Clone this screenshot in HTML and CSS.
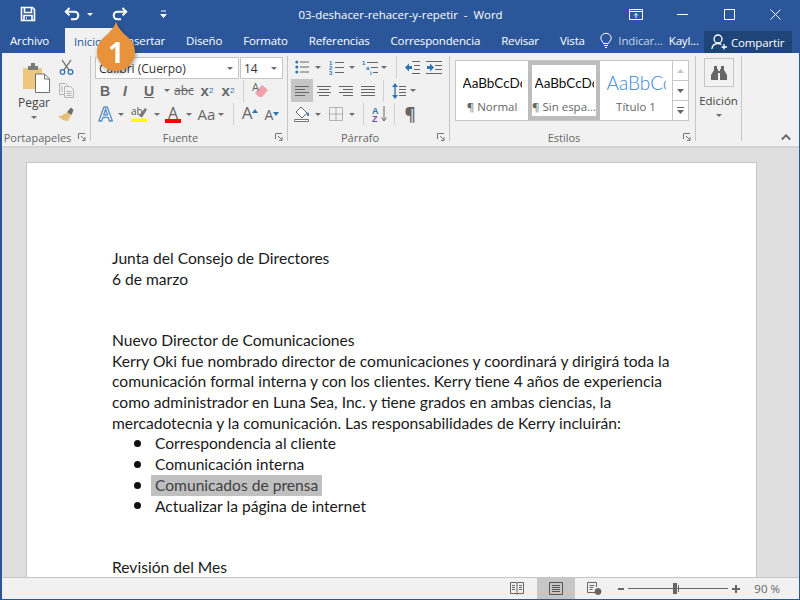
FILE: index.html
```html
<!DOCTYPE html>
<html lang="es">
<head>
<meta charset="utf-8">
<title>03-deshacer-rehacer-y-repetir - Word</title>
<link rel="stylesheet" href="styles.css">
</head>
<body>
<div class="window">

  <header class="titlebar">
    <div class="qat">
      <svg class="qat-save" width="16" height="16" viewBox="0 0 16 16" fill="none" stroke="#fff" stroke-width="1.6"><path d="M1.5 1.5h11l2 2v11h-13z"/><path d="M4.5 2v4.5h7V2"/><path d="M4 14.5V9.500h8v5"/><path d="M6 12h1"/></svg>
      <svg class="qat-undo" width="16" height="14" viewBox="0 0 16 14" fill="none" stroke="#fff" stroke-width="2"><path d="M5.500 1L1.800 4.700l3.700 3.700"/><path d="M2 4.700h8.500a3.800 3.800 0 0 1 0 7.600H7"/></svg>
      <span class="caret caret-white qat-caret"></span>
      <svg class="qat-redo" width="16" height="14" viewBox="0 0 16 14" fill="none" stroke="#fff" stroke-width="2"><path d="M10.500 1l3.700 3.700-3.700 3.700"/><path d="M14 4.700H5.500a3.800 3.800 0 0 0 0 7.600H9"/></svg>
      <svg class="qat-custom" width="7" height="8" viewBox="0 0 7 8"><path d="M1 1h5" stroke="#fff"/><path d="M0 4h7L3.500 8z" fill="#fff"/></svg>
    </div>
    <div class="doc-title">03-deshacer-rehacer-y-repetir &nbsp;-&nbsp; Word</div>
    <div class="winctl">
      <svg class="ctl-ribbon" width="14" height="11" viewBox="0 0 14 11" fill="none" stroke="#fff"><path d="M.5 .5h13v10H.5z"/><path d="M.5 2.500h13" /><path d="M7 9V4.500M5 6.500l2-2 2 2"/></svg>
      <svg class="ctl-min" width="11" height="1" viewBox="0 0 11 1"><path d="M0 .5h11" stroke="#fff"/></svg>
      <svg class="ctl-max" width="11" height="11" viewBox="0 0 11 11" fill="none" stroke="#fff"><path d="M.5 .5h10v10H.5z"/></svg>
      <svg class="ctl-close" width="11" height="11" viewBox="0 0 11 11" fill="none" stroke="#fff"><path d="M.5 .5l10 10M10.500 .5l-10 10"/></svg>
    </div>
  </header>

  <nav class="tabs">
    <span class="tab tab-file">Archivo</span>
    <span class="tab tab-active">Inicio</span>
    <span class="tab tab-insert">Insertar</span>
    <span class="tab">Diseño</span>
    <span class="tab">Formato</span>
    <span class="tab">Referencias</span>
    <span class="tab">Correspondencia</span>
    <span class="tab">Revisar</span>
    <span class="tab">Vista</span>
    <svg class="bulb" width="12" height="15" viewBox="0 0 12 15" fill="none" stroke="#fff"><path d="M3.500 10.500C3 8.500 .8 7.500 .8 5a5.200 4.700 0 0 1 10.400 0c0 2.500-2.200 3.500-2.700 5.500z"/><path d="M4 12.500h4M5 14.500h2"/></svg>
    <span class="tell">Indicar...</span>
    <span class="user">Kayl...</span>
    <span class="share">
      <svg width="17" height="16" viewBox="0 0 17 16" fill="none" stroke="#fff" stroke-width="1.300"><circle cx="7" cy="5" r="4"/><path d="M.8 15c.5-3.500 3-5.500 6.200-5.500 1.500 0 2.500.4 3.500 1"/><path d="M13 10v5.500M10.500 13H16"/></svg>
      Compartir
    </span>
  </nav>

  <section class="ribbon">
    <div class="group g-clip">
      <div class="gbody">
        <div class="paste">
          <svg width="29" height="31" viewBox="0 0 29 31"><path d="M1 6h19v21H1z" fill="#eec77f"/><path d="M6 4h3V1h4v3h3v4H6z" fill="#7a7a7a"/><path d="M13.500 12h9l5 5v13.500h-14z" fill="#fff" stroke="#6e6e6e"/><path d="M22.500 12v5h5" fill="none" stroke="#6e6e6e"/></svg>
          <span class="paste-label">Pegar</span>
          <span class="caret paste-caret"></span>
        </div>
        <div class="clip-tools">
          <div class="row">
            <svg width="15" height="16" viewBox="0 0 15 16" fill="none" stroke-width="1.300"><path d="M3 1l7 10M12 1L5 11" stroke="#666"/><circle cx="3.500" cy="13" r="2.300" stroke="#2f75b5"/><circle cx="11.500" cy="13" r="2.300" stroke="#2f75b5"/></svg>
          </div>
          <div class="row">
            <svg width="15" height="15" viewBox="0 0 15 15" fill="#f1f1f1" stroke="#b5b5b5"><path d="M.5 .5h6l2 2v9h-8z"/><path d="M5.500 3.500h6l3 3v8h-9z"/><path d="M7.500 8.500h5M7.500 10.500h5M7.500 12.500h5M2 4h2M2 6h2M2 8h2" fill="none"/></svg>
          </div>
          <div class="row">
            <svg width="16" height="15" viewBox="0 0 16 15"><path d="M10 5l3 3-3 6C6 14 3 12 0 9c3 0 5-1 6-2z" fill="#e6bf7a"/><path d="M9 5l4-4.500 2.500 2.500-2 5z" fill="#6e6e6e"/></svg>
          </div>
        </div>
      </div>
      <div class="glabel"><span class="gname">Portapapeles</span><span class="launch"><svg width="8" height="8" viewBox="0 0 8 8" fill="none" stroke="#777"><path d="M.5 6V.5H7M3 3l4 4M7 4v3.500H4"/></svg></span></div>
    </div>
    <div class="vsep"></div>

    <div class="group g-font">
      <div class="gbody gcol">
        <div class="row row-end">
          <div class="combo combo-font"><span>Calibri (Cuerpo)</span><i class="caret"></i></div>
          <div class="combo combo-size"><span>14</span><i class="caret"></i></div>
        </div>
        <div class="row">
          <span class="tool w20 t-b">B</span>
          <span class="tool w20 t-i">I</span>
          <span class="tool w28 t-u">U</span>
          <span class="tool w8"><i class="caret"></i></span>
          <span class="tool w26 t-abc">abc</span>
          <span class="tool w20 t-x">x<sub>2</sub></span>
          <span class="tool w22 t-x">x<sup>2</sup></span>
          <span class="sep ml4"></span>
          <span class="tool w32">
            <svg width="16" height="15" viewBox="0 0 16 15"><path d="M7 14L3 10l7-8 6 5-6 7z" fill="#f0a0aa"/><text x="0" y="8" class="ico-a">A</text></svg>
          </span>
        </div>
        <div class="row">
          <span class="tool w21 t-glow">A</span>
          <span class="tool w10"><i class="caret"></i></span>
          <span class="tool w26 stack">
            <svg width="16" height="16" viewBox="0 0 16 16"><text x="0" y="9" class="ico-ab">ab</text><path d="M8 10l6-8 2 1.500-5 8z" fill="#777"/><path d="M0 12.500h16V16H0z" fill="#ffff00"/></svg>
          </span>
          <span class="tool w9"><i class="caret"></i></span>
          <span class="tool w24 stack">
            <svg width="16" height="17" viewBox="0 0 16 17"><text x="8" y="12.500" text-anchor="middle" class="ico-big">A</text><path d="M0 13h16v4H0z" fill="#f00"/></svg>
          </span>
          <span class="tool w8"><i class="caret"></i></span>
          <span class="tool w23 ml2 t-aa">Aa</span>
          <span class="tool w6"><i class="caret"></i></span>
          <span class="sep ml9"></span>
          <span class="tool w32 t-grow">A<svg class="tip" width="6" height="4" viewBox="0 0 6 4"><path d="M0 4l3-4 3 4z" fill="#2f75b5"/></svg></span>
          <span class="tool w12 t-shrink">A<svg class="tip" width="6" height="4" viewBox="0 0 6 4"><path d="M0 0l3 4 3-4z" fill="#2f75b5"/></svg></span>
        </div>
      </div>
      <div class="glabel"><span class="gname">Fuente</span><span class="launch"><svg width="8" height="8" viewBox="0 0 8 8" fill="none" stroke="#777"><path d="M.5 6V.5H7M3 3l4 4M7 4v3.500H4"/></svg></span></div>
    </div>
    <div class="vsep"></div>

    <div class="group g-para">
      <div class="gbody gcol">
        <div class="row">
          <span class="tool w21">
            <svg width="14" height="14" viewBox="0 0 14 14"><g fill="#2f75b5"><circle cx="1.800" cy="2" r="1.500"/><circle cx="1.800" cy="7" r="1.500"/><circle cx="1.800" cy="12" r="1.500"/></g><path d="M5 2h9M5 7h9M5 12h9" stroke="#666"/></svg>
          </span>
          <span class="tool w12"><i class="caret"></i></span>
          <span class="tool w24">
            <svg width="15" height="15" viewBox="0 0 15 15"><g class="ico-num"><text x="0" y="5">1</text><text x="0" y="10">2</text><text x="0" y="15">3</text></g><path d="M6 2.500h9M6 7.500h9M6 12.500h9" stroke="#666"/></svg>
          </span>
          <span class="tool w8"><i class="caret"></i></span>
          <span class="tool w20 ml4">
            <svg width="16" height="15" viewBox="0 0 16 15"><g class="ico-num"><text x="0" y="5">1</text><text x="4" y="10">a</text><text x="8" y="15">i</text></g><path d="M5 2.500h11M9 7.500h7M11 12.500h5" stroke="#666"/></svg>
          </span>
          <span class="tool w8"><i class="caret"></i></span>
          <span class="sep ml8"></span>
          <span class="tool w22 ml4">
            <svg width="16" height="13" viewBox="0 0 16 13"><path d="M5 2.500L1 6.500l4 4V8h3V5H5z" fill="#2f75b5"/><path d="M8 .5h8M10 4.500h6M10 8.500h6M8 12.500h8" stroke="#666"/></svg>
          </span>
          <span class="tool w22">
            <svg width="16" height="13" viewBox="0 0 16 13"><path d="M4 2.500l4 4-4 4V8H1V5h3z" fill="#2f75b5"/><path d="M0 .5h16M9 4.500h7M9 8.500h7M0 12.500h16" stroke="#666"/></svg>
          </span>
        </div>
        <div class="row">
          <span class="tool w22 tool-on">
            <svg width="14" height="10" viewBox="0 0 14 10"><path d="M0 .5h14M0 3.500h10M0 6.500h14M0 9.500h10" stroke="#666"/></svg>
          </span>
          <span class="tool w22">
            <svg width="14" height="10" viewBox="0 0 14 10"><path d="M0 .5h14M2 3.500h10M0 6.500h14M2 9.500h10" stroke="#666"/></svg>
          </span>
          <span class="tool w22">
            <svg width="14" height="10" viewBox="0 0 14 10"><path d="M0 .5h14M4 3.500h10M0 6.500h14M4 9.500h10" stroke="#666"/></svg>
          </span>
          <span class="tool w22">
            <svg width="14" height="10" viewBox="0 0 14 10"><path d="M0 .5h14M0 3.500h14M0 6.500h14M0 9.500h14" stroke="#666"/></svg>
          </span>
          <span class="sep ml4"></span>
          <span class="tool w22 ml4">
            <svg width="14" height="16" viewBox="0 0 14 16"><path d="M3 2v12" stroke="#2f75b5" stroke-width="1.400"/><path d="M0 4l3-4 3 4zM0 12l3 4 3-4z" fill="#2f75b5"/><path d="M7 3.500h7M7 6.500h7M7 9.500h7M7 12.500h7" stroke="#666"/></svg>
          </span>
          <span class="tool w6"><i class="caret"></i></span>
        </div>
        <div class="row">
          <span class="tool w22">
            <svg width="16" height="16" viewBox="0 0 16 16"><path d="M7 1l6 6-5 5-6-6z" fill="#fff" stroke="#666"/><path d="M14 6c1.500 2 1.500 4 0 4s-1.500-2 0-4z" fill="#2f75b5"/><path d="M.5 13.500h14v2H.5z" fill="#fff" stroke="#777"/></svg>
          </span>
          <span class="tool w10"><i class="caret"></i></span>
          <span class="tool w26">
            <svg width="14" height="14" viewBox="0 0 14 14" fill="none" stroke="#777" stroke-dasharray="1 1"><path d="M.5 .5h13v13H.5zM7 .5v13M.5 7h13"/></svg>
          </span>
          <span class="tool w6"><i class="caret"></i></span>
          <span class="sep ml8"></span>
          <span class="tool w22 ml4">
            <svg width="15" height="16" viewBox="0 0 15 16"><text x="0" y="7.500" class="ico-sort-a">A</text><text x="0" y="16" class="ico-sort-z">Z</text><path d="M12 0v14M9.500 11.500L12 15l2.500-3.500" fill="none" stroke="#666"/></svg>
          </span>
          <span class="sep ml4"></span>
          <span class="tool w22 ml4 t-pil">¶</span>
        </div>
      </div>
      <div class="glabel"><span class="gname">Párrafo</span><span class="launch"><svg width="8" height="8" viewBox="0 0 8 8" fill="none" stroke="#777"><path d="M.5 6V.5H7M3 3l4 4M7 4v3.500H4"/></svg></span></div>
    </div>
    <div class="vsep"></div>

    <div class="group g-styles">
      <div class="gbody">
        <div class="gallery">
          <div class="style-cell"><span class="sample">AaBbCcDc</span><span class="style-name">¶ Normal</span></div>
          <div class="style-cell style-on"><span class="sample">AaBbCcDc</span><span class="style-name">¶ Sin espa...</span></div>
          <div class="style-cell"><span class="sample sample-h">AaBbCc</span><span class="style-name">Título 1</span></div>
          <div class="gal-scroll">
            <span class="gal-btn gal-top"><svg width="7" height="4" viewBox="0 0 7 4"><path d="M0 4l3.500-4L7 4z" fill="#c6c6c6"/></svg></span>
            <span class="gal-btn"><svg width="7" height="4" viewBox="0 0 7 4"><path d="M0 0l3.500 4L7 0z" fill="#666"/></svg></span>
            <span class="gal-btn"><svg width="7" height="7" viewBox="0 0 7 7"><path d="M0 .5h7" stroke="#666"/><path d="M0 3l3.500 4L7 3z" fill="#666"/></svg></span>
          </div>
        </div>
      </div>
      <div class="glabel"><span class="gname">Estilos</span><span class="launch"><svg width="8" height="8" viewBox="0 0 8 8" fill="none" stroke="#777"><path d="M.5 6V.5H7M3 3l4 4M7 4v3.500H4"/></svg></span></div>
    </div>
    <div class="vsep"></div>

    <div class="group g-edit">
      <div class="edit-btn">
        <svg width="16" height="14" viewBox="0 0 16 14" fill="#666"><path d="M3 0h3v3h1v2h2V3h1V0h3v4l3 5v5H9V7H7v7H0V9l3-5z"/></svg>
      </div>
      <span class="edit-label">Edición</span>
      <span class="caret edit-caret"></span>
    </div>
    <div class="vsep"></div>

    <div class="ribbon-end">
      <svg width="10" height="6" viewBox="0 0 10 6" fill="none" stroke="#666" stroke-width="1.800"><path d="M.8 5.500L5 1.300l4.200 4.200"/></svg>
    </div>
  </section>

  <main class="workspace">
    <article class="page">
      <p>Junta del Consejo de Directores<br>6 de marzo</p>
      <p class="gap">Nuevo Director de Comunicaciones<br>
      Kerry Oki fue nombrado director de comunicaciones y coordinará y dirigirá toda la<br>
      comunicación formal interna y con los clientes. Kerry tiene 4 años de experiencia<br>
      como administrador en Luna Sea, Inc. y tiene grados en ambas ciencias, la<br>
      mercadotecnia y la comunicación. Las responsabilidades de Kerry incluirán:</p>
      <ul>
        <li>Correspondencia al cliente</li>
        <li>Comunicación interna</li>
        <li><span class="selected">Comunicados de prensa</span></li>
        <li>Actualizar la página de internet</li>
      </ul>
      <p class="gap">Revisión del Mes</p>
    </article>
  </main>

  <footer class="statusbar">
    <span class="view">
      <svg width="14" height="13" viewBox="0 0 14 13" fill="#f1f1f1" stroke="#666"><path d="M.5 .5h6l.5 1 .5-1h6v11h-6l-.5 1-.5-1h-6z"/><path d="M7 1.500v10M2 3.500h3M2 5.500h3M2 7.500h3M9 3.500h3M9 5.500h3M9 7.500h3" fill="none"/></svg>
    </span>
    <span class="view view-on">
      <svg width="14" height="13" viewBox="0 0 14 13" fill="none" stroke="#555"><path d="M.5 .5h13v12H.5z"/><path d="M3 3.500h8M3 5.500h8M3 7.500h8M3 9.500h8"/></svg>
    </span>
    <span class="view">
      <svg width="14" height="13" viewBox="0 0 14 13" fill="none" stroke="#666"><path d="M8 10.500H.5V.5h9V5"/><path d="M2.500 3.500h5M2.500 5.500h4M2.500 7.500h3"/><circle cx="11" cy="9.500" r="3" fill="#666"/></svg>
    </span>
    <svg class="zoom-minus" width="6" height="2" viewBox="0 0 6 2"><path d="M0 0h6v2H0z" fill="#666"/></svg>
    <span class="slider"><i class="slider-mid"></i><i class="slider-thumb"></i></span>
    <svg class="zoom-plus" width="8" height="8" viewBox="0 0 8 8"><path d="M3 0h2v3h3v2H5v3H3V5H0V3h3z" fill="#666"/></svg>
    <span class="zoom-value">90 %</span>
  </footer>

  <!-- numbered step marker pointing at the redo button -->
  <svg class="callout" width="46" height="56" viewBox="0 0 46 56">
    <path d="M22 2C24 8 28 12 33 16.500A19 19 0 1 1 11 16.500C16 12 20 8 22 2Z" fill="#e8923b"/>
    <text x="22" y="43" text-anchor="middle" class="callout-num">1</text>
  </svg>
</div>
</body>
</html>
```
FILE: styles.css
```css
* { box-sizing: border-box; }

html, body { margin: 0; height: 100%; }

body {
  font-family: "Open Sans", "Noto Sans", sans-serif;
  font-size: 12px;
  color: #444;
  overflow: hidden;
}

svg { display: block; flex: none; overflow: visible; }

.window {
  position: relative;
  width: 800px;
  height: 600px;
  display: flex;
  flex-direction: column;
  background: #2b579a;
  border-left: 2px solid #2b579a;
  border-right: 1px solid #2b579a;
  border-bottom: 1px solid #2b579a;
  overflow: hidden;
}

/* title bar */
.titlebar {
  height: 28px;
  flex: none;
  display: grid;
  grid-template-columns: 1fr auto 1fr;
  align-items: center;
  color: #fff;
}
.qat { display: flex; align-items: center; }
.qat-save { margin-left: 18px; }
.qat-undo { margin-left: 28px; }
.qat-caret { margin-left: 7px; }
.qat-redo { margin-left: 19px; }
.qat-custom { margin-left: 32px; }
.doc-title { font-size: 11.450px; white-space: nowrap; }
.winctl { display: flex; align-items: center; justify-content: flex-end; }
.ctl-min { margin-left: 34px; }
.ctl-max { margin-left: 36px; }
.ctl-close { margin-left: 35px; margin-right: 18px; }

/* ribbon tab strip */
.tabs {
  height: 25px;
  flex: none;
  display: flex;
  align-items: center;
  color: #fff;
  font-size: 11.500px;
  letter-spacing: -.15px;
}
.tab { padding: 0 10.500px; line-height: 25px; white-space: nowrap; }
.tab-file { padding-left: 8px; padding-right: 16px; }
.tab-active {
  width: 50px;
  padding: 1px 0 0 9px;
  margin-top: 1px;
  background: #f1f1f1;
  color: #2b579a;
}
.tab-insert { padding-left: 9px; }
.bulb { margin-left: 5px; }
.tell { margin-left: 6px; color: #c6d3e8; }
.user { margin-left: 6px; }
.share {
  display: flex;
  align-items: center;
  gap: 3px;
  height: 22px;
  margin: 3px 7px 0 auto;
  padding-left: 7px;
  width: 88px;
  flex: none;
  background: #1e4478;
}

/* ribbon body */
.ribbon {
  height: 95px;
  flex: none;
  display: flex;
  background: #f1f1f1;
  border-bottom: 2px solid #d4d4d4;
}
.vsep {
  width: 1px;
  flex: none;
  margin: 3px 0 5px;
  background: #c6c6c6;
}
.group {
  flex: none;
  display: flex;
  flex-direction: column;
  padding-top: 2px;
  height: 93px;
}
.g-clip { width: 88px; }
.g-font { width: 196px; }
.g-para { width: 161px; }
.g-styles { width: 245px; }
.g-edit { width: 45px; }
.gbody { flex: 1; display: flex; min-height: 0; }
.gcol { flex-direction: column; }
.g-font .gbody { padding-left: 4px; }
.g-para .gbody { padding-left: 3px; }
.glabel { height: 16px; padding-bottom: 2px; flex: none; display: flex; align-items: center; color: #666; font-size: 11px; }
.gname { flex: 1; text-align: center; white-space: nowrap; }
.launch { width: 17px; display: flex; justify-content: center; }

.row { display: flex; align-items: center; height: 24px; flex: none; }
.row:nth-child(2) { height: 23px; }
.row-end { align-items: flex-end; }

.tool {
  display: flex;
  align-items: center;
  justify-content: center;
  height: 23px;
  flex: none;
  color: #666;
}
.tool-on { background: #c6c6c6; }
.w6 { width: 6px; } .w8 { width: 8px; } .w9 { width: 9px; } .w10 { width: 10px; }
.w12 { width: 12px; } .w20 { width: 20px; } .w21 { width: 21px; } .w22 { width: 22px; }
.w23 { width: 23px; } .w24 { width: 24px; } .w26 { width: 26px; } .w28 { width: 28px; }
.w32 { width: 32px; }
.ml2 { margin-left: 2px; } .ml4 { margin-left: 4px; } .ml8 { margin-left: 8px; } .ml9 { margin-left: 9px; }

.sep { width: 1px; height: 22px; background: #d0d0d0; flex: none; }

.caret {
  display: block;
  width: 0;
  height: 0;
  flex: none;
  border-top: 3px solid #6e6e6e;
  border-left: 3px solid transparent;
  border-right: 3px solid transparent;
}
.caret-white { border-top-color: #fff; }

/* clipboard */
.paste {
  width: 44px;
  margin-left: 10px;
  display: flex;
  flex-direction: column;
  align-items: center;
}
.paste svg { margin-top: 7px; margin-left: 4px; }
.paste-label { margin-top: 2px; line-height: 16px; font-size: 12px; color: #444; }
.paste-caret { margin-top: 5px; }
.clip-tools { width: 20px; display: flex; flex-direction: column; align-items: center; }
.clip-tools .row { justify-content: center; }

/* font controls */
.combo {
  height: 22px;
  display: flex;
  align-items: center;
  justify-content: space-between;
  padding: 0 5px 0 3px;
  background: #fff;
  border: 1px solid #c6c6c6;
  color: #333;
  font-size: 12px;
}
.combo-font { width: 144px; }
.combo-size { width: 43px; margin-left: 1px; }
.t-b { font: bold 14px "Liberation Sans", sans-serif; }
.t-i { font: italic bold 14px "Liberation Sans", sans-serif; }
.t-u { font: bold 14px "Liberation Sans", sans-serif; text-decoration: underline; }
.t-abc { font: 12px "Open Sans", sans-serif; text-decoration: line-through; }
.t-x { font: bold 15px "Liberation Sans", sans-serif; }
.t-x sub, .t-x sup { font-size: 8px; color: #2f75b5; font-weight: normal; }
.t-glow {
  font: bold 20px "Liberation Sans", sans-serif;
  color: #fff;
  -webkit-text-stroke: 1px #2f75b5;
}
.t-aa { font-size: 15px; }
.t-grow { font-size: 17px; align-items: flex-end; padding-bottom: 2px; }
.t-shrink { font-size: 14px; align-items: flex-end; padding-bottom: 2px; }
.tip { margin-bottom: 11px; }
.t-shrink .tip { margin-bottom: 8px; }
.t-pil { font-size: 17px; font-weight: bold; }
.ico-a { font: 11px "Open Sans", sans-serif; fill: #666; }
.ico-ab { font: 10px "Open Sans", sans-serif; fill: #555; }
.ico-big { font: 16px "Open Sans", sans-serif; fill: #666; }
.ico-num text { font: bold 6px "Liberation Sans", sans-serif; fill: #2f75b5; }
.ico-sort-a { font: bold 9px "Liberation Sans", sans-serif; fill: #2f75b5; }
.ico-sort-z { font: bold 9px "Liberation Sans", sans-serif; fill: #7b4bab; }

/* style gallery */
.gallery {
  display: flex;
  height: 61px;
  width: 234px;
  margin: 5px 0 0 5px;
  background: #fff;
  border: 1px solid #c6c6c6;
}
.style-cell {
  width: 72px;
  flex: none;
  display: flex;
  flex-direction: column;
  align-items: center;
  padding: 0 6px;
  overflow: hidden;
}
.style-on { border: 4px solid #bdbdbd; padding: 0 3px; }
.sample {
  width: 59px;
  height: 37px;
  overflow: hidden;
  font: 13.500px/44px "Lato", sans-serif;
  color: #111;
  white-space: nowrap;
  flex: none;
}
.style-on .sample { height: 33px; line-height: 36px; }
.sample-h { font-size: 19px; font-weight: 300; color: #3a85d0; line-height: 43px; }
.style-name { font-size: 11.500px; line-height: 18px; color: #666; white-space: nowrap; }
.gal-scroll { flex: 1; display: flex; flex-direction: column; border-left: 1px solid #c6c6c6; }
.gal-btn { flex: 1; display: flex; align-items: center; justify-content: center; border-bottom: 1px solid #c6c6c6; }
.gal-btn:last-child { border-bottom: 0; }

/* editing group */
.g-edit { align-items: center; }
.edit-btn {
  width: 30px;
  height: 29px;
  margin-top: 3px;
  display: flex;
  align-items: center;
  justify-content: center;
  border: 1px solid #c6c6c6;
}
.edit-label { margin-top: 6px; line-height: 16px; color: #444; font-size: 11.500px; }
.edit-caret { margin-top: 5px; }
.ribbon-end { flex: 1; display: flex; align-items: flex-end; justify-content: flex-end; padding: 0 8px 6px 0; }

/* document canvas */
.workspace {
  flex: 1;
  min-height: 0;
  background: #dfdfdf;
  padding: 14px 42px 0 24px;
  overflow: hidden;
}
.page {
  height: 100%;
  background: #fff;
  border: 1px solid #c6c6c6;
  border-bottom: 0;
  padding: 85px 0 0 85px;
  overflow: hidden;
  font: 15.620px/20.700px "Lato", sans-serif;
  color: #1a1a1a;
  white-space: nowrap;
}
.page p { margin: 0; }
.page .gap { margin-top: 40.500px; }
.page ul { margin: 0; padding: 0 0 0 22px; list-style: none; }
.page li { display: flex; align-items: center; }
.page li::before {
  content: "";
  width: 7px;
  height: 7px;
  margin-right: 14px;
  border-radius: 50%;
  background: #111;
  flex: none;
}
.selected { display: inline-block; background: #c0c0c0; color: #404040; margin-left: -4px; padding: 0 4px; }

/* status bar */
.statusbar {
  height: 22px;
  flex: none;
  display: flex;
  align-items: center;
  justify-content: flex-end;
  background: #f1f1f1;
  border-top: 1px solid #c6c6c6;
  padding-right: 19px;
  color: #666;
  font-size: 11.500px;
}
.view { width: 38px; height: 21px; display: flex; align-items: center; justify-content: center; }
.view-on { background: #c6c6c6; margin: 0 0 0 1px; }
.zoom-minus { margin-left: 5px; }
.zoom-plus { margin-left: 4px; }
.slider { position: relative; width: 100px; height: 1px; margin-left: 4px; background: #666; }
.slider-thumb { position: absolute; left: 45px; top: -5px; width: 4px; height: 11px; background: #666; }
.slider-mid { position: absolute; left: 50px; top: -3px; width: 1px; height: 7px; background: #666; }
.zoom-value { margin-left: 14px; white-space: nowrap; }

/* step marker */
.callout {
  position: absolute;
  left: 92px;
  top: 20px;
  overflow: visible;
  filter: drop-shadow(1px 2px 2px rgba(0,0,0,.35));
}
.callout-num { font: bold 28px "Open Sans", sans-serif; fill: #fff; }
```
